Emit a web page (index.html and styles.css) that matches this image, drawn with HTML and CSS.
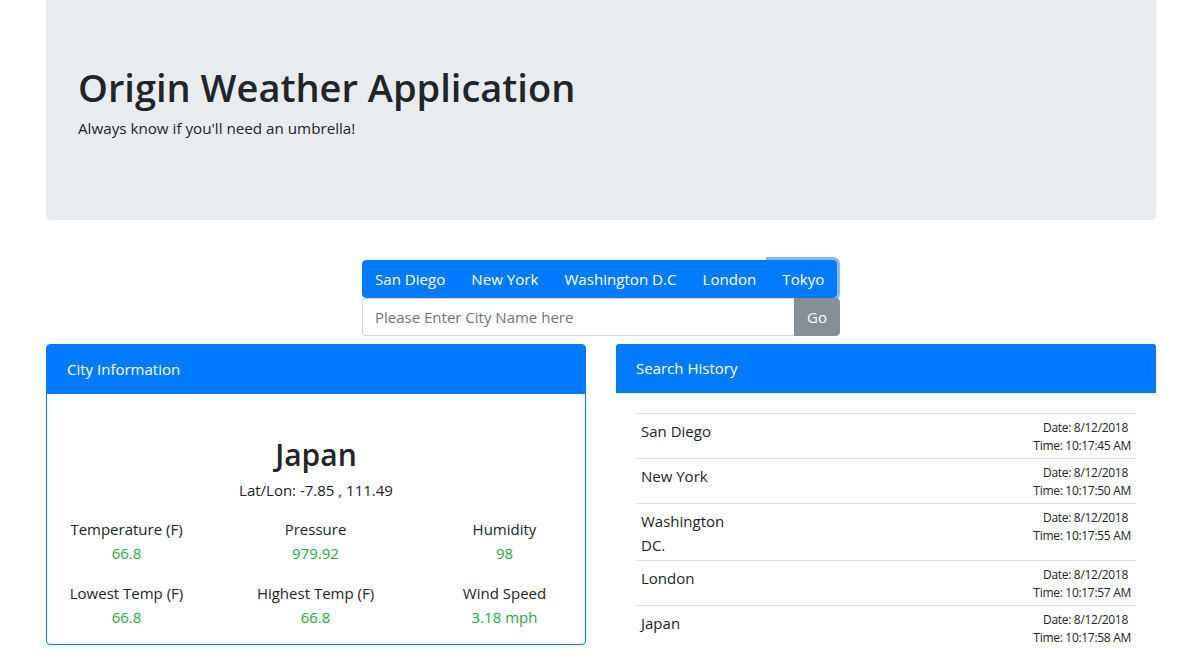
FILE: index.html
```html
<!DOCTYPE html>
<html lang="en">
<head>
<meta charset="utf-8">
<title>Origin Weather Application</title>
<link rel="stylesheet" href="styles.css">
</head>
<body>
<div class="container">
  <header class="jumbotron">
    <h1 class="title">Origin Weather Application</h1>
    <p class="lead">Always know if you'll need an umbrella!</p>
  </header>

  <div class="controls">
    <div class="btn-group">
      <button class="btn">San Diego</button>
      <button class="btn">New York</button>
      <button class="btn">Washington D.C</button>
      <button class="btn">London</button>
      <button class="btn btn-focus">Tokyo</button>
    </div>
    <div class="input-group">
      <input class="form-control" type="text" placeholder="Please Enter City Name here">
      <button class="btn-go">Go</button>
    </div>
  </div>

  <div class="panels">
    <section class="card card-bordered">
      <div class="card-header">City Information</div>
      <div class="card-body city-body">
        <h2 class="city-name">Japan</h2>
        <p class="latlon">Lat/Lon: -7.85 , 111.49</p>
        <div class="stats">
          <div class="stat"><div class="stat-label">Temperature (F)</div><div class="stat-value">66.8</div></div>
          <div class="stat"><div class="stat-label">Pressure</div><div class="stat-value">979.92</div></div>
          <div class="stat"><div class="stat-label">Humidity</div><div class="stat-value">98</div></div>
          <div class="stat"><div class="stat-label">Lowest Temp (F)</div><div class="stat-value">66.8</div></div>
          <div class="stat"><div class="stat-label">Highest Temp (F)</div><div class="stat-value">66.8</div></div>
          <div class="stat"><div class="stat-label">Wind Speed</div><div class="stat-value">3.18 mph</div></div>
        </div>
      </div>
    </section>

    <section class="card">
      <div class="card-header">Search History</div>
      <div class="card-body history-body">
        <div class="history">
          <div class="row"><div class="name">San Diego</div><div class="when"><div class="date">Date: 8/12/2018</div><div>Time: 10:17:45 AM</div></div></div>
          <div class="row"><div class="name">New York</div><div class="when"><div class="date">Date: 8/12/2018</div><div>Time: 10:17:50 AM</div></div></div>
          <div class="row"><div class="name">Washington<br>DC.</div><div class="when"><div class="date">Date: 8/12/2018</div><div>Time: 10:17:55 AM</div></div></div>
          <div class="row"><div class="name">London</div><div class="when"><div class="date">Date: 8/12/2018</div><div>Time: 10:17:57 AM</div></div></div>
          <div class="row"><div class="name">Japan</div><div class="when"><div class="date">Date: 8/12/2018</div><div>Time: 10:17:58 AM</div></div></div>
        </div>
      </div>
    </section>
  </div>
</div>
</body>
</html>
```

FILE: styles.css
```css
* { box-sizing: border-box; }
html, body { margin: 0; padding: 0; }
body {
  font-family: "Open Sans", "Noto Sans", "Liberation Sans", sans-serif;
  font-size: 16px;
  line-height: 1.5;
  color: #212529;
  background: #fff;
  padding-left: 4px;
}
.container {
  width: 1110px;
  margin: 0 auto;
}
.jumbotron {
  background: #e9ecef;
  height: 220px;
  border-radius: 0 0 5px 5px;
  padding: 63px 32px 0;
}
.title {
  margin: 0;
  font-size: 38px;
  font-weight: 600;
  line-height: 48px;
}
.lead {
  margin: 5px 0 0;
  font-size: 15.2px;
  line-height: 24px;
}
.controls {
  width: 478px;
  margin: 40px auto 0;
  display: flex;
  flex-direction: column;
}
.btn-group {
  display: flex;
  align-self: flex-start;
  position: relative;
}
.btn {
  font: inherit;
  font-size: 15.1px;
  line-height: 24px;
  color: #fff;
  background: #007bff;
  border: 1px solid #007bff;
  padding: 6px 12px;
  height: 38px;
  margin: 0;
  cursor: pointer;
}
.btn:first-child { border-radius: 4px 0 0 4px; }
.btn:last-child { border-radius: 0 4px 4px 0; }
.btn-focus {
  position: relative;
  z-index: 1;
  box-shadow: 0 0 0 3px rgba(0, 123, 255, 0.5);
}
.input-group {
  display: flex;
  position: relative;
  z-index: 2;
  height: 38px;
}
.form-control {
  flex: 1 1 auto;
  font: inherit;
  font-size: 15px;
  color: #495057;
  border: 1px solid #ced4da;
  border-right: 0;
  border-radius: 4px 0 0 4px;
  padding: 6px 12px;
  height: 38px;
  background: #fff;
}
.form-control::placeholder { color: #6c757d; }
.btn-go {
  font: inherit;
  font-size: 15px;
  color: #fff;
  background: #868e96;
  border: 1px solid #868e96;
  border-radius: 0 4px 4px 0;
  padding: 6px 12px;
  height: 38px;
  width: 46px;
}
.panels {
  display: grid;
  grid-template-columns: 540px 540px;
  column-gap: 30px;
  margin-top: 8px;
  align-items: start;
}
.card {
  border-radius: 4px;
  background: #fff;
}
.card-bordered {
  border: 1px solid #007bff;
}
.card-header {
  background: #007bff;
  color: #fff;
  font-size: 15px;
  line-height: 24px;
  height: 49px;
  padding: 12px 20px;
  border-radius: 3px 3px 0 0;
}
.card-bordered .card-header { border-radius: 2px 2px 0 0; }
.city-body {
  padding: 42px 20px 15px;
  text-align: center;
}
.city-name {
  margin: 0;
  font-size: 30px;
  font-weight: 600;
  line-height: 38px;
}
.latlon {
  margin: 4px 0 0;
  font-size: 15px;
  line-height: 24px;
}
.stats {
  display: grid;
  grid-template-columns: repeat(3, 189px);
  row-gap: 16px;
  margin: 15px -35px 0;
}
.stat-label, .stat-value {
  font-size: 15px;
  line-height: 24px;
}
.stat-value { color: #28a745; }
.history-body {
  padding: 20px;
}
.row {
  display: flex;
  justify-content: space-between;
  border-top: 1px solid #dee2e6;
  padding: 5px 5px 3px;
}
.name {
  font-size: 15px;
  line-height: 24px;
}
.when {
  font-size: 12px;
  line-height: 18px;
  text-align: right;
  letter-spacing: -0.3px;
}
.date { padding-right: 3px; }
```
